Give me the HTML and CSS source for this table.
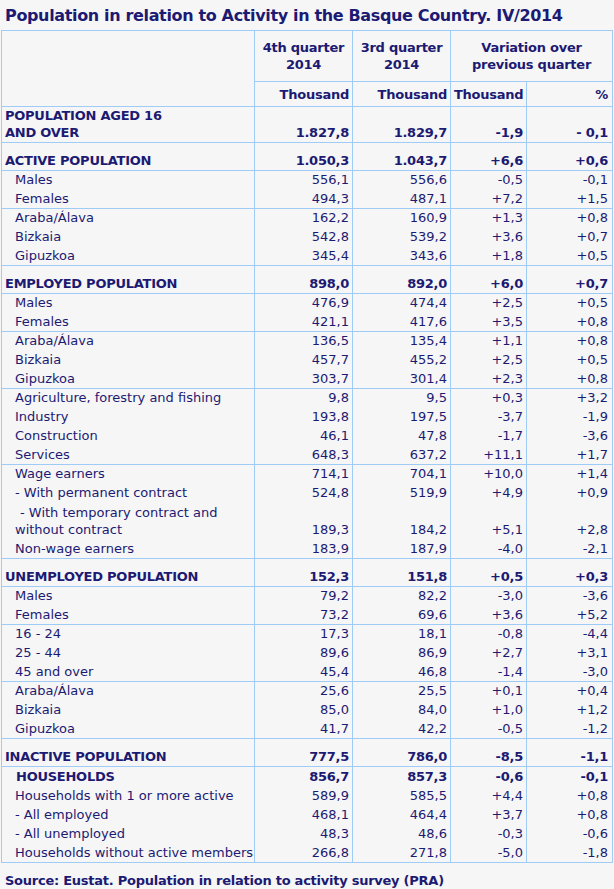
FILE: index.html
```html
<!DOCTYPE html>
<html lang="en">
<head>
<meta charset="utf-8">
<title>Population in relation to Activity in the Basque Country. IV/2014</title>
<link rel="stylesheet" href="styles.css">
</head>
<body>
<div class="page">
  <h1 class="title">Population in relation to Activity in the Basque Country. IV/2014</h1>
  <table class="stats">
    <colgroup>
      <col class="c-label">
      <col class="c-q4">
      <col class="c-q3">
      <col class="c-var">
      <col class="c-pct">
    </colgroup>
    <thead>
      <tr class="head-top">
        <th rowspan="2"></th>
        <th>4th quarter<br>2014</th>
        <th>3rd quarter<br>2014</th>
        <th colspan="2">Variation over<br>previous quarter</th>
      </tr>
      <tr class="head-units">
        <th class="r">Thousand</th>
        <th class="r">Thousand</th>
        <th class="r">Thousand</th>
        <th class="r">%</th>
      </tr>
    </thead>
    <tbody class="grp">
      <tr class="strong">
        <td class="label">POPULATION AGED 16<br>AND OVER</td>
        <td class="num">1.827,8</td><td class="num">1.829,7</td><td class="num">-1,9</td><td class="num">- 0,1</td>
      </tr>
    </tbody>
    <tbody class="grp">
      <tr class="strong section">
        <td class="label">ACTIVE POPULATION</td>
        <td class="num">1.050,3</td><td class="num">1.043,7</td><td class="num">+6,6</td><td class="num">+0,6</td>
      </tr>
    </tbody>
    <tbody class="grp">
      <tr><td class="label sub">Males</td><td class="num">556,1</td><td class="num">556,6</td><td class="num">-0,5</td><td class="num">-0,1</td></tr>
      <tr><td class="label sub">Females</td><td class="num">494,3</td><td class="num">487,1</td><td class="num">+7,2</td><td class="num">+1,5</td></tr>
    </tbody>
    <tbody class="grp">
      <tr><td class="label sub">Araba/Álava</td><td class="num">162,2</td><td class="num">160,9</td><td class="num">+1,3</td><td class="num">+0,8</td></tr>
      <tr><td class="label sub">Bizkaia</td><td class="num">542,8</td><td class="num">539,2</td><td class="num">+3,6</td><td class="num">+0,7</td></tr>
      <tr><td class="label sub">Gipuzkoa</td><td class="num">345,4</td><td class="num">343,6</td><td class="num">+1,8</td><td class="num">+0,5</td></tr>
    </tbody>
    <tbody class="grp">
      <tr class="strong section">
        <td class="label">EMPLOYED POPULATION</td>
        <td class="num">898,0</td><td class="num">892,0</td><td class="num">+6,0</td><td class="num">+0,7</td>
      </tr>
    </tbody>
    <tbody class="grp">
      <tr><td class="label sub">Males</td><td class="num">476,9</td><td class="num">474,4</td><td class="num">+2,5</td><td class="num">+0,5</td></tr>
      <tr><td class="label sub">Females</td><td class="num">421,1</td><td class="num">417,6</td><td class="num">+3,5</td><td class="num">+0,8</td></tr>
    </tbody>
    <tbody class="grp">
      <tr><td class="label sub">Araba/Álava</td><td class="num">136,5</td><td class="num">135,4</td><td class="num">+1,1</td><td class="num">+0,8</td></tr>
      <tr><td class="label sub">Bizkaia</td><td class="num">457,7</td><td class="num">455,2</td><td class="num">+2,5</td><td class="num">+0,5</td></tr>
      <tr><td class="label sub">Gipuzkoa</td><td class="num">303,7</td><td class="num">301,4</td><td class="num">+2,3</td><td class="num">+0,8</td></tr>
    </tbody>
    <tbody class="grp">
      <tr><td class="label sub">Agriculture, forestry and fishing</td><td class="num">9,8</td><td class="num">9,5</td><td class="num">+0,3</td><td class="num">+3,2</td></tr>
      <tr><td class="label sub">Industry</td><td class="num">193,8</td><td class="num">197,5</td><td class="num">-3,7</td><td class="num">-1,9</td></tr>
      <tr><td class="label sub">Construction</td><td class="num">46,1</td><td class="num">47,8</td><td class="num">-1,7</td><td class="num">-3,6</td></tr>
      <tr><td class="label sub">Services</td><td class="num">648,3</td><td class="num">637,2</td><td class="num">+11,1</td><td class="num">+1,7</td></tr>
    </tbody>
    <tbody class="grp">
      <tr><td class="label sub">Wage earners</td><td class="num">714,1</td><td class="num">704,1</td><td class="num">+10,0</td><td class="num">+1,4</td></tr>
      <tr><td class="label sub">- With permanent contract</td><td class="num">524,8</td><td class="num">519,9</td><td class="num">+4,9</td><td class="num">+0,9</td></tr>
      <tr class="twoline"><td class="label sub hang">- With temporary contract and without contract</td><td class="num">189,3</td><td class="num">184,2</td><td class="num">+5,1</td><td class="num">+2,8</td></tr>
      <tr><td class="label sub">Non-wage earners</td><td class="num">183,9</td><td class="num">187,9</td><td class="num">-4,0</td><td class="num">-2,1</td></tr>
    </tbody>
    <tbody class="grp">
      <tr class="strong section">
        <td class="label">UNEMPLOYED POPULATION</td>
        <td class="num">152,3</td><td class="num">151,8</td><td class="num">+0,5</td><td class="num">+0,3</td>
      </tr>
    </tbody>
    <tbody class="grp">
      <tr><td class="label sub">Males</td><td class="num">79,2</td><td class="num">82,2</td><td class="num">-3,0</td><td class="num">-3,6</td></tr>
      <tr><td class="label sub">Females</td><td class="num">73,2</td><td class="num">69,6</td><td class="num">+3,6</td><td class="num">+5,2</td></tr>
    </tbody>
    <tbody class="grp">
      <tr><td class="label sub">16 - 24</td><td class="num">17,3</td><td class="num">18,1</td><td class="num">-0,8</td><td class="num">-4,4</td></tr>
      <tr><td class="label sub">25 - 44</td><td class="num">89,6</td><td class="num">86,9</td><td class="num">+2,7</td><td class="num">+3,1</td></tr>
      <tr><td class="label sub">45 and over</td><td class="num">45,4</td><td class="num">46,8</td><td class="num">-1,4</td><td class="num">-3,0</td></tr>
    </tbody>
    <tbody class="grp">
      <tr><td class="label sub">Araba/Álava</td><td class="num">25,6</td><td class="num">25,5</td><td class="num">+0,1</td><td class="num">+0,4</td></tr>
      <tr><td class="label sub">Bizkaia</td><td class="num">85,0</td><td class="num">84,0</td><td class="num">+1,0</td><td class="num">+1,2</td></tr>
      <tr><td class="label sub">Gipuzkoa</td><td class="num">41,7</td><td class="num">42,2</td><td class="num">-0,5</td><td class="num">-1,2</td></tr>
    </tbody>
    <tbody class="grp">
      <tr class="strong section">
        <td class="label">INACTIVE POPULATION</td>
        <td class="num">777,5</td><td class="num">786,0</td><td class="num">-8,5</td><td class="num">-1,1</td>
      </tr>
    </tbody>
    <tbody class="grp">
      <tr class="strong households">
        <td class="label sub-strong">HOUSEHOLDS</td>
        <td class="num">856,7</td><td class="num">857,3</td><td class="num">-0,6</td><td class="num">-0,1</td>
      </tr>
      <tr><td class="label sub">Households with 1 or more active</td><td class="num">589,9</td><td class="num">585,5</td><td class="num">+4,4</td><td class="num">+0,8</td></tr>
      <tr><td class="label sub">- All employed</td><td class="num">468,1</td><td class="num">464,4</td><td class="num">+3,7</td><td class="num">+0,8</td></tr>
      <tr><td class="label sub">- All unemployed</td><td class="num">48,3</td><td class="num">48,6</td><td class="num">-0,3</td><td class="num">-0,6</td></tr>
      <tr><td class="label sub">Households without active members</td><td class="num">266,8</td><td class="num">271,8</td><td class="num">-5,0</td><td class="num">-1,8</td></tr>
    </tbody>
  </table>
  <p class="source">Source: Eustat. Population in relation to activity survey (PRA)</p>
</div>
</body>
</html>
```

FILE: styles.css
```css
html, body {
  margin: 0;
  padding: 0;
  background: #f6f6f6;
}

body {
  font-family: "DejaVu Sans", Verdana, sans-serif;
  font-size: 13px;
  line-height: 17px;
  color: #1c1a72;
}

.page {
  padding: 6px 0 0 1px;
}

.title {
  margin: 0 0 4px 4px;
  font-size: 16px;
  line-height: 20px;
  font-weight: bold;
  letter-spacing: -0.35px;
  color: #1c1a72;
}

.stats {
  border-collapse: collapse;
  table-layout: fixed;
  width: 611px;
  border: 1px solid #9fcbf7;
}

.c-label { width: 253px; }
.c-q4 { width: 98px; }
.c-q3 { width: 98px; }
.c-var { width: 76px; }
.c-pct { width: 86px; }

.stats th,
.stats td {
  border-left: 1px solid #9fcbf7;
  border-right: 1px solid #9fcbf7;
  padding: 1px 3px;
  vertical-align: bottom;
  white-space: nowrap;
}

.stats th {
  font-weight: bold;
  text-align: center;
  letter-spacing: -0.25px;
  border-bottom: 1px solid #9fcbf7;
}

.head-top th {
  padding-top: 8px;
  padding-bottom: 8px;
  vertical-align: middle;
}

.head-units th {
  padding-top: 4px;
  padding-bottom: 3px;
}

.stats th.r {
  text-align: right;
}

.grp {
  border-top: 1px solid #9fcbf7;
}

.grp > tr:first-child > td {
  padding-top: 0;
}

.stats td.num {
  text-align: right;
}

.stats td.num:last-child,
.stats th.r:last-child {
  padding-right: 4px;
}

.stats td.label {
  text-align: left;
  padding-left: 3px;
}

.stats td.sub {
  padding-left: 13px;
}

.stats td.sub-strong {
  padding-left: 14px;
}

.stats td.hang {
  white-space: normal;
  text-indent: 5px;
  padding-right: 30px;
}

.strong td {
  font-weight: bold;
  letter-spacing: -0.25px;
}

.grp > tr.section > td {
  padding-top: 9px;
}

.grp > tr.households > td {
  padding-top: 1px;
}

.twoline td {
  padding-top: 2px;
}

.source {
  margin: 9px 0 0 4px;
  font-weight: bold;
  font-size: 13px;
  line-height: 17px;
  letter-spacing: -0.25px;
}
```
